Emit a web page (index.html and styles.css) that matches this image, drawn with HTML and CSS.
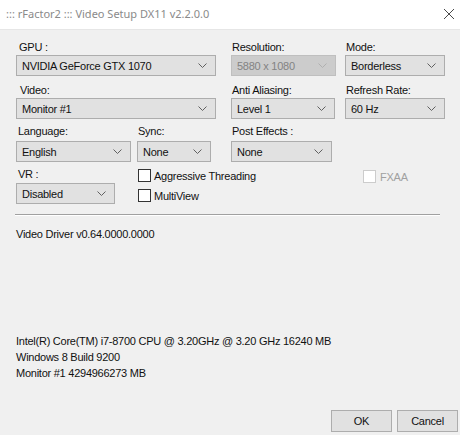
FILE: index.html
```html
<!DOCTYPE html>
<html>
<head>
<meta charset="utf-8">
<link rel="stylesheet" href="styles.css">
</head>
<body>
<div class="window">
  <div class="titlebar">
    <span class="title">::: rFactor2 ::: Video Setup DX11 v2.2.0.0</span>
    <svg class="close" width="12" height="12" viewBox="0 0 12 12"><path d="M1 1 L11 11 M11 1 L1 11" stroke="#4a4a4a" stroke-width="1" fill="none"/></svg>
  </div>
  <div class="content">
    <div class="row row1">
      <div class="field w-gpu"><div class="label l3">GPU :</div><div class="combo">NVIDIA GeForce GTX 1070<svg class="chev" width="9" height="5" viewBox="0 0 9 5"><polyline points="0.5,0.5 4.5,4.5 8.5,0.5" fill="none" stroke="#606060"/></svg></div></div>
      <div class="field w-res"><div class="label l1">Resolution:</div><div class="combo disabled">5880 x 1080<svg class="chev" width="9" height="5" viewBox="0 0 9 5"><polyline points="0.5,0.5 4.5,4.5 8.5,0.5" fill="none" stroke="#b0b0b0"/></svg></div></div>
      <div class="field w-mode"><div class="label l1">Mode:</div><div class="combo">Borderless<svg class="chev" width="9" height="5" viewBox="0 0 9 5"><polyline points="0.5,0.5 4.5,4.5 8.5,0.5" fill="none" stroke="#606060"/></svg></div></div>
    </div>
    <div class="row row2">
      <div class="field w-gpu"><div class="label l4">Video:</div><div class="combo">Monitor #1<svg class="chev" width="9" height="5" viewBox="0 0 9 5"><polyline points="0.5,0.5 4.5,4.5 8.5,0.5" fill="none" stroke="#606060"/></svg></div></div>
      <div class="field w-aa"><div class="label l1">Anti Aliasing:</div><div class="combo">Level 1<svg class="chev" width="9" height="5" viewBox="0 0 9 5"><polyline points="0.5,0.5 4.5,4.5 8.5,0.5" fill="none" stroke="#606060"/></svg></div></div>
      <div class="field w-mode"><div class="label l1">Refresh Rate:</div><div class="combo">60 Hz<svg class="chev" width="9" height="5" viewBox="0 0 9 5"><polyline points="0.5,0.5 4.5,4.5 8.5,0.5" fill="none" stroke="#606060"/></svg></div></div>
    </div>
    <div class="row row3">
      <div class="field w-lang"><div class="label l2">Language:</div><div class="combo">English<svg class="chev" width="9" height="5" viewBox="0 0 9 5"><polyline points="0.5,0.5 4.5,4.5 8.5,0.5" fill="none" stroke="#606060"/></svg></div></div>
      <div class="field w-sync"><div class="label l1">Sync:</div><div class="combo">None<svg class="chev" width="9" height="5" viewBox="0 0 9 5"><polyline points="0.5,0.5 4.5,4.5 8.5,0.5" fill="none" stroke="#606060"/></svg></div></div>
      <div class="field w-post"><div class="label l1">Post Effects :</div><div class="combo">None<svg class="chev" width="9" height="5" viewBox="0 0 9 5"><polyline points="0.5,0.5 4.5,4.5 8.5,0.5" fill="none" stroke="#606060"/></svg></div></div>
    </div>
    <div class="row row4">
      <div class="field w-vr"><div class="label l2">VR :</div><div class="combo">Disabled<svg class="chev" width="9" height="5" viewBox="0 0 9 5"><polyline points="0.5,0.5 4.5,4.5 8.5,0.5" fill="none" stroke="#606060"/></svg></div></div>
      <div class="checks">
        <div class="check"><span class="box"></span>Aggressive Threading</div>
        <div class="check"><span class="box"></span>MultiView</div>
      </div>
      <div class="check fxaa"><span class="box"></span>FXAA</div>
    </div>
    <div class="separator"></div>
    <div class="info driver">Video Driver v0.64.0000.0000</div>
    <div class="sysinfo">
      <div class="info">Intel(R) Core(TM) i7-8700 CPU @ 3.20GHz @ 3.20 GHz 16240 MB</div>
      <div class="info">Windows 8 Build 9200</div>
      <div class="info">Monitor #1 4294966273 MB</div>
    </div>
  </div>
  <div class="buttons">
    <div class="btn">OK</div>
    <div class="btn">Cancel</div>
  </div>
</div>
</body>
</html>
```

FILE: styles.css
```css
html, body {
  margin: 0;
  padding: 0;
  background: #f0f0f0;
}
.window {
  width: 460px;
  height: 435px;
  background: #f0f0f0;
  font-family: "Liberation Sans", Arial, sans-serif;
  font-size: 11px;
  letter-spacing: -0.25px;
  color: #111;
  overflow: hidden;
}
.titlebar {
  height: 30px;
  background: #ffffff;
  display: flex;
  align-items: center;
  justify-content: space-between;
  padding: 0 5px 2px 6px;
  box-sizing: border-box;
  border-bottom: 1px solid #e6e6e6;
  letter-spacing: 0;
}
.title {
  font-family: "Noto Sans", "Open Sans", sans-serif;
  font-size: 11px;
  color: #8a8a8a;
}
.content {
  padding: 11px 0 0 16px;
}
.row {
  display: flex;
}
.row2 { margin-top: 8px; }
.row3 { margin-top: 6px; }
.row4 { margin-top: 6px; }
.field {
  display: flex;
  flex-direction: column;
}
.label {
  height: 13px;
  line-height: 13px;
  white-space: nowrap;
}
.l1 { padding-left: 1px; }
.l2 { padding-left: 2px; }
.l3 { padding-left: 3px; }
.l4 { padding-left: 4px; }
.row1 .combo, .row2 .combo { margin-top: 1px; }
.row3 .combo { margin-top: 3px; }
.row4 .combo { margin-top: 2px; }
.combo {
  height: 21px;
  box-sizing: border-box;
  border: 1px solid #adadad;
  background: #e1e1e1;
  display: flex;
  align-items: center;
  justify-content: space-between;
  padding: 0 8px 0 5px;
  white-space: nowrap;
}
.combo.disabled {
  background: #cccccc;
  border-color: #bfbfbf;
  color: #838383;
}
.chev { flex: none; }
.w-gpu { width: 200px; margin-right: 15px; }
.w-res { width: 105px; margin-right: 9px; }
.w-aa { width: 104px; margin-right: 10px; }
.w-mode { width: 100px; }
.w-lang { width: 115px; margin-right: 6px; }
.w-sync { width: 74px; margin-right: 20px; }
.w-post { width: 101px; }
.w-vr { width: 99px; margin-right: 23px; }
.checks {
  display: flex;
  flex-direction: column;
  gap: 7px;
  padding-top: 1px;
  width: 120px;
}
.check {
  display: flex;
  align-items: center;
  height: 13px;
  white-space: nowrap;
}
.box {
  width: 13px;
  height: 13px;
  box-sizing: border-box;
  border: 1px solid #333333;
  background: #ffffff;
  margin-right: 3px;
  flex: none;
}
.fxaa {
  margin-left: 105px;
  margin-top: 2px;
  color: #a0a0a0;
}
.fxaa .box {
  border-color: #cccccc;
  margin-right: 4px;
}
.separator {
  margin-top: 10px;
  width: 425px;
  height: 1px;
  background: #a0a0a0;
  border-bottom: 1px solid #ffffff;
  margin-left: -1px;
}
.info {
  line-height: 16px;
  height: 16px;
  white-space: nowrap;
}
.driver { margin-top: 10px; }
.sysinfo { margin-top: 91px; }
.buttons {
  display: flex;
  justify-content: flex-end;
  gap: 5px;
  padding-right: 2px;
  margin-top: 29px;
}
.btn {
  width: 61px;
  height: 22px;
  box-sizing: border-box;
  border: 1px solid #adadad;
  background: #e1e1e1;
  display: flex;
  align-items: center;
  justify-content: center;
}
```
